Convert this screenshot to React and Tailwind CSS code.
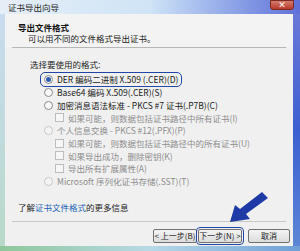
const FONT = { fontFamily: '"Noto Sans CJK SC", "Liberation Sans", sans-serif' };

function Radio({ checked, disabled }) {
  return (
    <span
      className={`w-[9px] h-[9px] rounded-full border shrink-0 flex items-center justify-center ${
        disabled ? 'border-[#c8c8c8] bg-[#f4f4f4]' : 'border-[#8a8a8a] bg-[#fafafa]'
      }`}
    >
      {checked && <span className="w-[5px] h-[5px] rounded-full bg-[#2a5db0]" />}
    </span>
  );
}

function Check({ disabled }) {
  return (
    <span
      className={`w-[9px] h-[9px] border shrink-0 ${
        disabled ? 'border-[#bdbdbd] bg-[#f6f6f6]' : 'border-[#8a8a8a] bg-white'
      }`}
    />
  );
}

function Option({ children, checked, disabled, focus }) {
  return (
    <div className="h-[13px] flex items-center gap-[4px] pl-[39px]">
      <div
        className={`flex items-center gap-[4px] h-[13px] pr-[3px] pl-[3px] ml-[-3px] ${
          focus ? 'outline outline-[1.5px] outline-[#2146a8] rounded-[4px]' : ''
        }`}
      >
        <Radio checked={checked} disabled={disabled} />
        <span className={disabled ? 'text-[#8d8d8d]' : 'text-[#1a1a1a]'}>{children}</span>
      </div>
    </div>
  );
}

function SubCheck({ children }) {
  return (
    <div className="h-[12.5px] flex items-center gap-[4px] pl-[50px]">
      <Check disabled />
      <span className="text-[#8d8d8d]">{children}</span>
    </div>
  );
}

function Button({ children, focus }) {
  return (
    <div
      className={`h-[14px] flex items-center justify-center whitespace-nowrap border border-[#707070] rounded-[2px] bg-gradient-to-b from-[#f4f4f4] to-[#dcdcdc] text-[#1a1a1a] text-[8px] ${
        focus ? 'outline outline-[1.5px] outline-[#2146a8] outline-offset-[1px]' : ''
      }`}
    >
      {children}
    </div>
  );
}

export default function App() {
  return (
    <div
      className="relative w-[300px] h-[251px] overflow-hidden bg-gradient-to-b from-[#c7dcf0] to-[#a9d3c0] text-[8.5px] leading-none"
      style={FONT}
    >
      {/* title bar */}
      <div className="h-[14px] flex items-center bg-gradient-to-r from-[#e6eef7] via-[#cfe4f6] to-[#5f6fd6]">
        <span className="pl-[8px] text-[#1e1e1e] text-[8.5px]">证书导出向导</span>
        <div className="ml-auto mr-[6px] mb-[4px] w-[24px] h-[10px] rounded-b-[3px] bg-gradient-to-b from-[#d27b6e] to-[#b8382a] border border-[#7d2b22] flex items-center justify-center text-white text-[8px] font-bold">
          ×
        </div>
      </div>

      <div className="flex h-[232px]">
        <div className="w-[5px] bg-gradient-to-b from-[#c9dcef] to-[#b8d9c9]" />
        {/* client area */}
        <div className="w-[288px] bg-[#f0f0f0] flex flex-col">
          <div className="h-[33px] bg-[#f3f3f3] pt-[9px] pl-[13px]">
            <div className="font-bold text-[#111]">导出文件格式</div>
            <div className="mt-[2px] pl-[10px] text-[#222]">可以用不同的文件格式导出证书。</div>
          </div>
          <div className="mx-[7px] h-px bg-[#b6b6b6]" />

          <div className="pt-[12px] pl-[25px] text-[#222]">选择要使用的格式:</div>
          <div className="mt-[4px] flex flex-col">
            <Option checked focus>
              DER 编码二进制 X.509 (.CER)(D)
            </Option>
            <Option>Base64 编码 X.509(.CER)(S)</Option>
            <Option>加密消息语法标准 - PKCS #7 证书(.P7B)(C)</Option>
            <SubCheck>如果可能，则数据包括证书路径中所有证书(I)</SubCheck>
            <Option disabled>个人信息交换 - PKCS #12(.PFX)(P)</Option>
            <SubCheck>如果可能，则数据包括证书路径中的所有证书(U)</SubCheck>
            <SubCheck>如果导出成功，删除密钥(K)</SubCheck>
            <SubCheck>导出所有扩展属性(A)</SubCheck>
            <Option disabled>Microsoft 序列化证书存储(.SST)(T)</Option>
          </div>

          <div className="mt-[15px] pl-[13px] text-[#222]">
            了解<span className="text-[#1f5fb8]">证书文件格式</span>的更多信息
          </div>
          <div className="mt-[10px] mx-[7px] h-px bg-[#c8c8c8]" />
          <div className="mt-[7px] flex pl-[148px] gap-[1px]">
            <div className="w-[44px]">
              <Button>&lt; 上一步(B)</Button>
            </div>
            <div className="w-[44px]">
              <Button focus>下一步(N) &gt;</Button>
            </div>
            <div className="w-[42px] ml-[5px]">
              <Button>取消</Button>
            </div>
          </div>
        </div>
        <div className="w-[7px] bg-gradient-to-b from-[#6a78d8] via-[#3c5fd0] to-[#5d86d6]" />
      </div>
      <div className="h-[5px] bg-gradient-to-r from-[#8fc79a] via-[#b7d9e6] to-[#6f9fd6]" />

      {/* arrow overlay */}
      <svg className="absolute left-[222px] top-[188px]" width="50" height="40" viewBox="0 0 50 40">
        <path d="M40 4 L46 10 L24 26 L28 31 L8 34 L13 17 L18 21 Z" fill="#1d3aa6" />
      </svg>
    </div>
  );
}
